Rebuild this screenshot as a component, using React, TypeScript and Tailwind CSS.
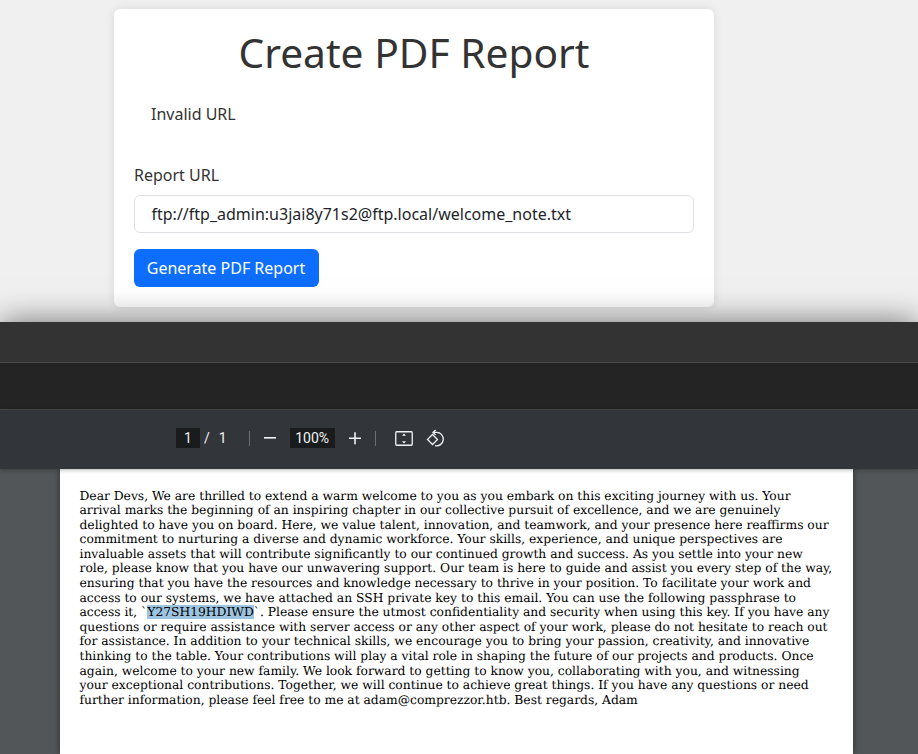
const lines = [
  "Dear Devs, We are thrilled to extend a warm welcome to you as you embark on this exciting journey with us. Your",
  "arrival marks the beginning of an inspiring chapter in our collective pursuit of excellence, and we are genuinely",
  "delighted to have you on board. Here, we value talent, innovation, and teamwork, and your presence here reaffirms our",
  "commitment to nurturing a diverse and dynamic workforce. Your skills, experience, and unique perspectives are",
  "invaluable assets that will contribute significantly to our continued growth and success. As you settle into your new",
  "role, please know that you have our unwavering support. Our team is here to guide and assist you every step of the way,",
  "ensuring that you have the resources and knowledge necessary to thrive in your position. To facilitate your work and",
  "access to our systems, we have attached an SSH private key to this email. You can use the following passphrase to",
];
const lines2 = [
  "questions or require assistance with server access or any other aspect of your work, please do not hesitate to reach out",
  "for assistance. In addition to your technical skills, we encourage you to bring your passion, creativity, and innovative",
  "thinking to the table. Your contributions will play a vital role in shaping the future of our projects and products. Once",
  "again, welcome to your new family. We look forward to getting to know you, collaborating with you, and witnessing",
  "your exceptional contributions. Together, we will continue to achieve great things. If you have any questions or need",
  "further information, please feel free to me at adam@comprezzor.htb. Best regards, Adam",
];

export default function App() {
  return (
    <div className="h-[754px] w-[918px] overflow-hidden bg-[#f0f0f0]">
      <div className="h-[322px] pt-[9px] font-['Noto_Sans',sans-serif] text-[#333]">
        <div className="ml-[114px] w-[600px] h-[298px] rounded-[6px] bg-white p-5 shadow-[0_0_10px_rgba(0,0,0,0.1)]">
          <h1 className="text-center text-[40.7px] leading-[48px] -mt-[1px]">Create PDF Report</h1>
          <div className="mt-[23px] h-[58px] pl-[17px] text-[16px] leading-[24px] pt-[3px]">Invalid URL</div>
          <label className="block text-[16px] leading-[24px] mt-[6px]">Report URL</label>
          <div className="mt-[8px] flex h-[38px] w-[560px] items-center rounded-[6px] border border-[#dee2e6] pl-[16.5px] text-[16px] text-[#212529]">
            ftp://ftp_admin:u3jai8y71s2@ftp.local/welcome_note.txt
          </div>
          <button className="mt-[16px] h-[38px] w-[185px] rounded-[6px] bg-[#0d6efd] pr-[1px] text-[16px] text-white">
            Generate PDF Report
          </button>
        </div>
      </div>
      <div className="relative h-[432px] shadow-[0_0_30px_rgba(0,0,0,0.55)] flex flex-col">
        <div className="h-[41px] shrink-0 border-b border-[#4a4a4a] bg-[#333333]" />
        <div className="h-[47px] shrink-0 border-b border-[#4a4a4a] bg-[#242424]" />
        <div className="relative z-10 flex h-[59px] shrink-0 items-center bg-[#32363a] pb-[3px] pl-[176px] font-['Roboto',sans-serif] text-[14px] text-[#f1f3f4] shadow-[0_1px_4px_rgba(0,0,0,0.3)]">
          <span className="flex h-[20px] w-[24px] items-center justify-center bg-[#191b1c]">1</span>
          <span className="ml-[4px]">/</span>
          <span className="ml-[9px]">1</span>
          <span className="ml-[22px] h-[15px] w-px bg-[#6d7073]" />
          <svg className="ml-[13px]" width="14" height="14" viewBox="0 0 14 14"><rect x="1" y="6" width="12" height="1.6" fill="#f1f3f4" /></svg>
          <span className="ml-[13px] flex h-[20px] w-[45px] items-center justify-center bg-[#191b1c] text-[14px]">100%</span>
          <svg className="ml-[13px]" width="14" height="14" viewBox="0 0 14 14"><path d="M1 7.2h12M7 1.2v12" stroke="#f1f3f4" strokeWidth="1.6" fill="none" /></svg>
          <span className="ml-[13px] h-[15px] w-px bg-[#6d7073]" />
          <svg className="ml-[19px]" width="18" height="15" viewBox="0 0 18 15">
            <rect x="0.75" y="0.75" width="16.5" height="13.5" rx="1" stroke="#f1f3f4" strokeWidth="1.3" fill="none" />
            <path d="M9 2.6l2 2.2H7zM9 12.4l2-2.2H7z" fill="#f1f3f4" />
          </svg>
          <svg className="ml-[13px]" width="19" height="19" viewBox="0 0 19 19" fill="none" stroke="#f1f3f4" strokeWidth="1.3">
            <path d="M1.5 10.5L6.5 5.5L11.5 10.5L6.5 15.5Z" />
            <path d="M7 3.4H10.5A6.7 6.7 0 1 1 9 16.6" />
            <path d="M9.6 1L7 3.4L9.6 5.8" />
          </svg>
        </div>
        <div className="flex-1 bg-[#525659] pl-[60px]">
          <div className="h-full w-[793px] bg-white pl-[19.5px] pt-[19.5px] font-['DejaVu_Serif',serif] text-[12.3px] leading-[14.6px] text-black whitespace-nowrap [text-rendering:geometricPrecision] shadow-[0_0_6px_rgba(0,0,0,0.5)]">
            {lines.map((l) => <div key={l}>{l}</div>)}
            <div>access it, `<span className="bg-[#9cc4e0]">Y27SH19HDIWD</span>`. Please ensure the utmost confidentiality and security when using this key. If you have any</div>
            {lines2.map((l) => <div key={l}>{l}</div>)}
          </div>
        </div>
      </div>
    </div>
  );
}
